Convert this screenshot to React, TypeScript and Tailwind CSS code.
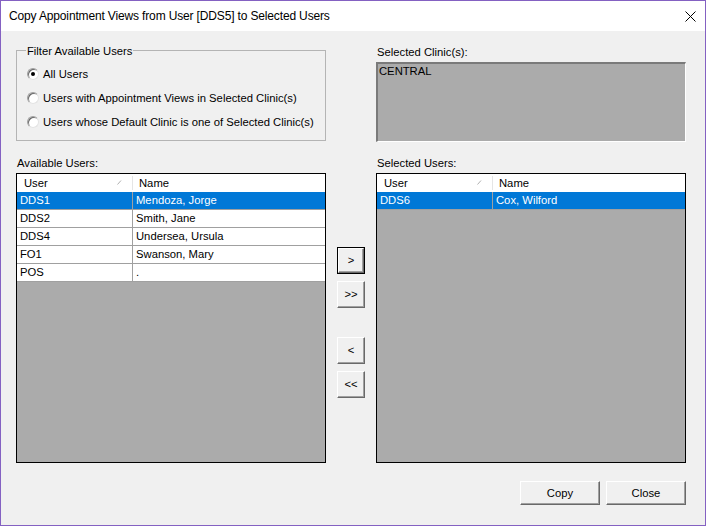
import React from "react";

type Row = { user: string; name: string; selected?: boolean };

const availRows: Row[] = [
  { user: "DDS1", name: "Mendoza, Jorge", selected: true },
  { user: "DDS2", name: "Smith, Jane" },
  { user: "DDS4", name: "Undersea, Ursula" },
  { user: "FO1", name: "Swanson, Mary" },
  { user: "POS", name: "." },
];

const selRows: Row[] = [{ user: "DDS6", name: "Cox, Wilford", selected: true }];

function ListView({ rows }: { rows: Row[] }) {
  return (
    <div className="w-[310px] h-[290px] border border-black bg-[#ababab] flex flex-col overflow-hidden">
      <div className="h-[18px] shrink-0 bg-white flex items-center">
        <div className="w-[115px] h-full flex items-center pl-[7px] relative">
          <span>User</span>
          <svg className="absolute left-[100px] top-[6px]" width="5" height="5" viewBox="0 0 5 5">
            <line x1="0.5" y1="4.5" x2="4" y2="0.5" stroke="#b0b0b0" strokeWidth="1" />
          </svg>
        </div>
        <div className="w-px h-[14px] bg-[#e5e5e5]" />
        <div className="flex-1 pl-[6px]">Name</div>
      </div>
      {rows.map((r) => (
        <div
          key={r.user}
          className={`h-[18px] shrink-0 flex border-b border-[#a0a0a0] ${
            r.selected ? "bg-[#0078d7] text-white" : "bg-white text-black"
          }`}
        >
          <div className="w-[115px] flex items-center pl-[3px]">{r.user}</div>
          <div className="w-px bg-[#a0a0a0]" />
          <div className="flex-1 flex items-center pl-[3px]">{r.name}</div>
        </div>
      ))}
    </div>
  );
}

function WinButton({
  children,
  className = "",
  isDefault = false,
}: {
  children: React.ReactNode;
  className?: string;
  isDefault?: boolean;
}) {
  const inner = (
    <div className="w-full h-full flex items-center justify-center bg-[#f0f0f0] border-t border-l border-white border-b border-r border-b-[#696969] border-r-[#696969] shadow-[inset_-1px_-1px_0_#a0a0a0]">
      {children}
    </div>
  );
  return (
    <div className={`${className} ${isDefault ? "border border-black" : ""}`}>{inner}</div>
  );
}

function Radio({ checked, label }: { checked?: boolean; label: string }) {
  return (
    <div className="h-[24px] flex items-center">
      <div className="w-[12px] h-[12px] rounded-full border border-t-[#a0a0a0] border-l-[#a0a0a0] border-b-[#e3e3e3] border-r-[#e3e3e3] bg-white flex items-center justify-center shadow-[inset_1px_1px_0_#696969]">
        {checked && <div className="w-[4px] h-[4px] rounded-full bg-black" />}
      </div>
      <span className="ml-[4px]">{label}</span>
    </div>
  );
}

export default function App() {
  return (
    <div className="w-[706px] h-[526px] border border-[#8461c2] flex flex-col font-['Liberation_Sans',Arial,sans-serif] text-[11.25px] leading-[13px] text-black overflow-hidden">
      <div className="h-[30px] shrink-0 bg-white flex items-center pl-[8px] pr-[9px]">
        <span className="text-[12px] tracking-[-0.15px] font-['Liberation_Sans',Arial,sans-serif] mt-[1px]">
          Copy Appointment Views from User [DDS5] to Selected Users
        </span>
        <svg className="ml-auto" width="11" height="11" viewBox="0 0 11 11">
          <path d="M0.5 0.5 L10.5 10.5 M10.5 0.5 L0.5 10.5" stroke="#000" strokeWidth="1" />
        </svg>
      </div>
      <div className="flex-1 bg-[#f0f0f0] pl-[15px] pr-[19px] pt-[13px]">
        <div className="flex justify-between">
          <fieldset className="w-[310px] h-[97px] border border-[#b4b4b4]">
            <legend className="ml-[9px] px-[1px] leading-[13px] translate-y-[1px]">Filter Available Users</legend>
            <div className="pt-[5px] pl-[10px] flex flex-col">
              <Radio checked label="All Users" />
              <Radio label="Users with Appointment Views in Selected Clinic(s)" />
              <Radio label="Users whose Default Clinic is one of Selected Clinic(s)" />
            </div>
          </fieldset>
          <div className="w-[310px] flex flex-col">
            <div className="h-[18px] pl-[1px] pt-[2px]">Selected Clinic(s):</div>
            <div className="h-[80px] bg-[#ababab] border-t-2 border-l-2 border-t-[#7a7a7a] border-l-[#7a7a7a] border-b border-r border-b-white border-r-white pl-[1px] pt-[1px]">
              CENTRAL
            </div>
          </div>
        </div>
        <div className="flex justify-between mt-[14px]">
          <div className="h-[17px] pl-[1px] pt-[1px]">Available Users:</div>
          <div className="w-[310px] h-[17px] pl-[1px] pt-[1px]">Selected Users:</div>
        </div>
        <div className="flex">
          <ListView rows={availRows} />
          <div className="w-[28px] ml-[11px] flex flex-col pt-[74px]">
            <WinButton isDefault className="h-[27px]">&gt;</WinButton>
            <WinButton className="h-[27px] mt-[7px]">&gt;&gt;</WinButton>
            <WinButton className="h-[27px] mt-[29px]">&lt;</WinButton>
            <WinButton className="h-[27px] mt-[7px]">&lt;&lt;</WinButton>
          </div>
          <div className="ml-[11px]">
            <ListView rows={selRows} />
          </div>
        </div>
        <div className="flex justify-end mt-[18px] gap-[6px]">
          <WinButton className="w-[80px] h-[24px]">Copy</WinButton>
          <WinButton className="w-[80px] h-[24px]">Close</WinButton>
        </div>
      </div>
    </div>
  );
}
